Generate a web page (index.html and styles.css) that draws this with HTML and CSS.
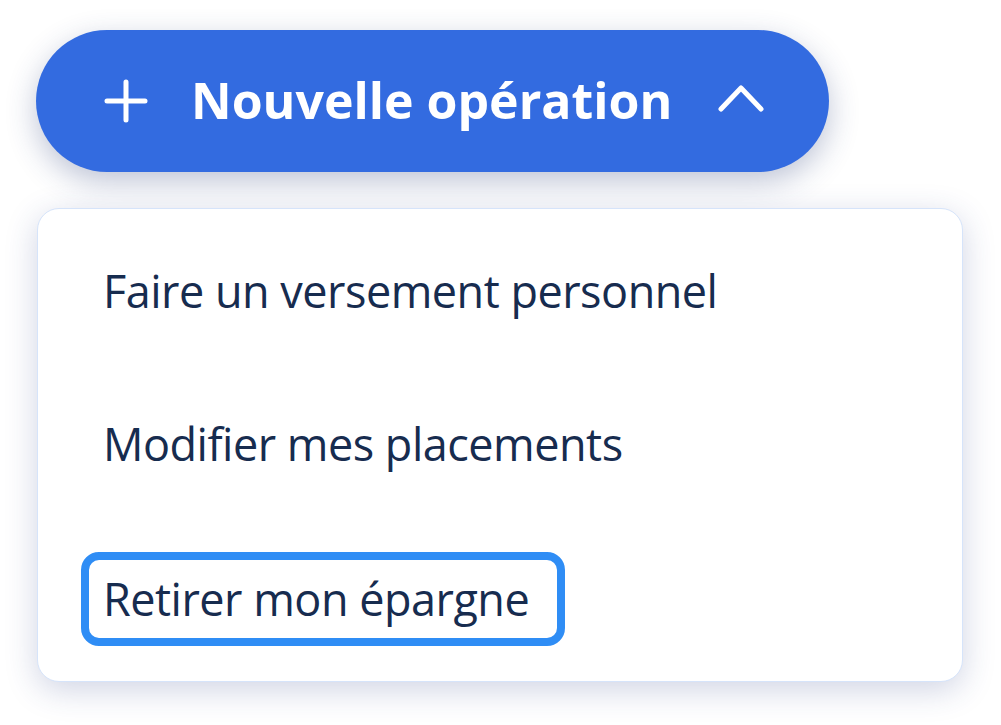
FILE: index.html
```html
<!DOCTYPE html>
<html lang="fr">
<head>
<meta charset="utf-8">
<title>Nouvelle opération</title>
<link rel="stylesheet" href="styles.css">
</head>
<body>
<div class="wrap">
  <button class="main-btn" type="button">
    <svg class="ico plus" width="44" height="44" viewBox="0 0 44 44"><path d="M22 3v38M3 22h38" stroke="#fff" stroke-width="5" stroke-linecap="round" fill="none"/></svg>
    <span class="btn-label">Nouvelle opération</span>
    <svg class="ico chev" width="46" height="32" viewBox="0 0 46 32"><path d="M3 27L23 6l20 21" stroke="#fff" stroke-width="5" stroke-linecap="round" stroke-linejoin="round" fill="none"/></svg>
  </button>
  <div class="menu">
    <div class="item"><a class="link" href="#">Faire un versement personnel</a></div>
    <div class="item"><a class="link" href="#">Modifier mes placements</a></div>
    <div class="item"><a class="link focus" href="#">Retirer mon épargne</a></div>
  </div>
</div>
</body>
</html>
```
FILE: styles.css
```css
* { box-sizing: border-box; }
html, body { margin: 0; padding: 0; background: #fff; }
body { font-family: "Open Sans", "Liberation Sans", sans-serif; }
.wrap { padding: 30px 0 43px 36px; display: flex; flex-direction: column; align-items: flex-start; gap: 36px; }
.main-btn {
  width: 793px; height: 142px; border: none; border-radius: 71px;
  background: #336be0; color: #fff;
  display: flex; align-items: center; padding: 0 0 0 68px;
  box-shadow: 0 10px 30px rgba(40, 60, 120, 0.3);
  font-family: inherit; cursor: pointer;
}
.plus { margin-right: 43px; }
.btn-label { font-size: 50px; font-weight: 700; line-height: 1; margin-top: -2px; }
.chev { margin-left: 46px; margin-top: -6px; }
.menu {
  width: 926px; height: 474px; margin-left: 1px;
  background: #fff; border: 1px solid #d6e4fa; border-radius: 22px;
  box-shadow: 0 8px 32px rgba(40, 60, 130, 0.22);
  padding: 6px 0 8px;
  display: flex; flex-direction: column;
}
.item { height: 153px; display: flex; align-items: center; }
.item:last-child { padding-top: 4px; }
.link {
  margin-left: 43px; padding: 10px 28px 10px 14px;
  border: 8px solid transparent; border-radius: 18px;
  font-size: 45px; line-height: 58px; color: #172c4f; text-decoration: none;
  font-weight: 500; letter-spacing: -0.5px;
}
.link.focus { border-color: #2f8df5; }
```
